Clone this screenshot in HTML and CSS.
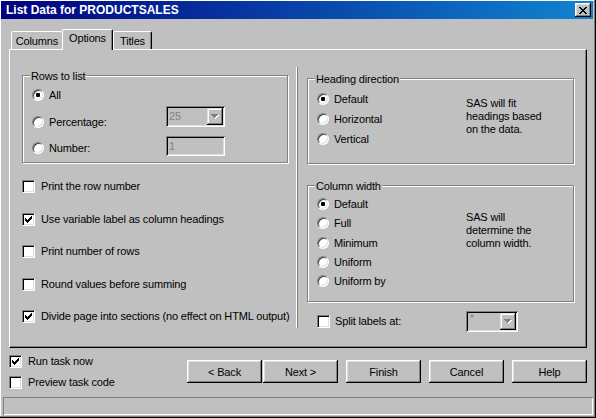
FILE: index.html
```html
<!DOCTYPE html>
<html>
<head>
<meta charset="utf-8">
<title>List Data for PRODUCTSALES</title>
<link rel="stylesheet" href="styles.css">
</head>
<body>
<div class="window">
  <div class="titlebar">
    <span class="title">List Data for PRODUCTSALES</span>
    <span class="close"><svg width="8" height="7" viewBox="0 0 8 7"><path d="M0 0h2v1H0zM6 0h2v1H6zM1 1h2v1H1zM5 1h2v1H5zM2 2h4v1H2zM3 3h2v1H3zM2 4h4v1H2zM1 5h2v1H1zM5 5h2v1H5zM0 6h2v1H0zM6 6h2v1H6z" fill="#000"/></svg></span>
  </div>

  <div class="tabs">
    <div class="tab tab-columns">Columns</div>
    <div class="tab tab-options active">Options</div>
    <div class="tab tab-titles">Titles</div>
  </div>

  <div class="panel">
    <div class="col-left">
      <div class="group group-rows">
        <span class="caption">Rows to list</span>
        <div class="opt"><span class="radio checked"></span><span>All</span></div>
        <div class="field-row row-pct">
          <div class="opt opt-field"><span class="radio"></span><span>Percentage:</span></div>
          <div class="combo combo-pct">
            <span class="combo-text">25</span>
            <span class="combo-btn"><svg width="8" height="5" viewBox="0 0 8 5"><path d="M1 1h7v1H1zM2 2h5v1H2zM3 3h3v1H3zM4 4h1v1H4z" fill="#fff"/><path d="M0 0h7v1H0zM1 1h5v1H1zM2 2h3v1H2zM3 3h1v1H3z" fill="#808080"/></svg></span>
          </div>
        </div>
        <div class="field-row row-num">
          <div class="opt opt-field opt-num"><span class="radio"></span><span>Number:</span></div>
          <div class="textbox">1</div>
        </div>
      </div>

      <div class="checks">
        <div class="chk"><span class="checkbox"></span><span>Print the row number</span></div>
        <div class="chk"><span class="checkbox"><svg width="7" height="7" viewBox="0 0 7 7"><path d="M0 2h1v3H0zM1 3h1v3H1zM2 4h1v3H2zM3 3h1v3H3zM4 2h1v3H4zM5 1h1v3H5zM6 0h1v3H6z" fill="#000"/></svg></span><span>Use variable label as column headings</span></div>
        <div class="chk"><span class="checkbox"></span><span>Print number of rows</span></div>
        <div class="chk"><span class="checkbox"></span><span>Round values before summing</span></div>
        <div class="chk"><span class="checkbox"><svg width="7" height="7" viewBox="0 0 7 7"><path d="M0 2h1v3H0zM1 3h1v3H1zM2 4h1v3H2zM3 3h1v3H3zM4 2h1v3H4zM5 1h1v3H5zM6 0h1v3H6z" fill="#000"/></svg></span><span>Divide page into sections (no effect on HTML output)</span></div>
      </div>
    </div>

    <div class="divider"></div>

    <div class="col-right">
      <div class="group group-heading">
        <span class="caption">Heading direction</span>
        <div class="radios radios-heading">
          <div class="opt"><span class="radio checked"></span><span>Default</span></div>
          <div class="opt"><span class="radio"></span><span>Horizontal</span></div>
          <div class="opt"><span class="radio"></span><span>Vertical</span></div>
        </div>
        <div class="desc desc-heading">SAS will fit<br>headings based<br>on the data.</div>
      </div>

      <div class="group group-width">
        <span class="caption">Column width</span>
        <div class="radios radios-width">
          <div class="opt"><span class="radio checked"></span><span>Default</span></div>
          <div class="opt"><span class="radio"></span><span>Full</span></div>
          <div class="opt"><span class="radio"></span><span>Minimum</span></div>
          <div class="opt"><span class="radio"></span><span>Uniform</span></div>
          <div class="opt"><span class="radio"></span><span>Uniform by</span></div>
        </div>
        <div class="desc desc-width">SAS will<br>determine the<br>column width.</div>
      </div>

      <div class="split-row">
        <div class="chk split-label"><span class="checkbox"></span><span>Split labels at:</span></div>
        <div class="combo combo-split">
          <span class="combo-text combo-text-small">*</span>
          <span class="combo-btn"><svg width="8" height="5" viewBox="0 0 8 5"><path d="M1 1h7v1H1zM2 2h5v1H2zM3 3h3v1H3zM4 4h1v1H4z" fill="#fff"/><path d="M0 0h7v1H0zM1 1h5v1H1zM2 2h3v1H2zM3 3h1v1H3z" fill="#808080"/></svg></span>
        </div>
      </div>
    </div>
  </div>

  <div class="footer">
    <div class="footer-checks">
      <div class="chk"><span class="checkbox"><svg width="7" height="7" viewBox="0 0 7 7"><path d="M0 2h1v3H0zM1 3h1v3H1zM2 4h1v3H2zM3 3h1v3H3zM4 2h1v3H4zM5 1h1v3H5zM6 0h1v3H6z" fill="#000"/></svg></span><span>Run task now</span></div>
      <div class="chk"><span class="checkbox"></span><span>Preview task code</span></div>
    </div>
    <div class="buttons">
      <button class="btn btn-back">&lt; Back</button>
      <button class="btn btn-next">Next &gt;</button>
      <button class="btn btn-gap">Finish</button>
      <button class="btn btn-gap">Cancel</button>
      <button class="btn btn-gap">Help</button>
    </div>
  </div>

  <div class="statusbar"></div>
</div>
</body>
</html>
```

FILE: styles.css
```css
* {
  box-sizing: border-box;
}

html,
body {
  margin: 0;
  padding: 0;
}

body {
  background: #c0c0c0;
  font-family: "Liberation Sans", Arial, sans-serif;
  font-size: 11px;
  letter-spacing: -0.15px;
  color: #000;
}

.window {
  width: 596px;
  height: 418px;
  padding: 1px 3px 3px 1px;
  display: flex;
  flex-direction: column;
  background: #c0c0c0;
  box-shadow: inset -1px -1px 0 #000, inset -2px -2px 0 #808080, inset 1px 1px 0 #fff;
}

/* title bar */
.titlebar {
  height: 18px;
  flex: none;
  display: flex;
  align-items: center;
  padding: 0 2px 0 5px;
  background: linear-gradient(to right, #000080, #1084d0);
}

.title {
  flex: 1;
  color: #fff;
  font-weight: bold;
  font-size: 12px;
  letter-spacing: 0;
  line-height: 18px;
  white-space: nowrap;
}

.close {
  width: 16px;
  height: 14px;
  display: flex;
  align-items: center;
  justify-content: center;
  background: #c0c0c0;
  box-shadow: inset -1px -1px 0 #000, inset 1px 1px 0 #fff, inset -2px -2px 0 #808080, inset 2px 2px 0 #dfdfdf;
}

.close svg {
  display: block;
}

/* tabs */
.tabs {
  flex: none;
  height: 20px;
  margin-top: 10px;
  padding-left: 10px;
  display: flex;
  align-items: flex-end;
}

.tab {
  height: 18px;
  padding-top: 3px;
  line-height: 13px;
  text-align: center;
  white-space: nowrap;
  background: #c0c0c0;
  border-top: 1px solid #fff;
  border-left: 1px solid #fff;
  border-right: 1px solid #000;
  border-radius: 2px 2px 0 0;
  box-shadow: inset -1px 0 0 #808080;
}

.tab-columns {
  width: 51px;
  border-right: none;
  box-shadow: none;
}

.tab-options {
  width: 51px;
}

.tab-titles {
  width: 39px;
}

.tab.active {
  height: 21px;
  padding-top: 2px;
  margin-bottom: -1px;
  position: relative;
  z-index: 1;
}

/* tab page */
.panel {
  flex: none;
  margin-left: 8px;
  width: 578px;
  height: 299px;
  display: flex;
  border-top: 1px solid #fff;
  border-left: 1px solid #fff;
  border-right: 1px solid #000;
  border-bottom: 1px solid #000;
  box-shadow: inset -1px -1px 0 #808080;
}

.col-left {
  width: 286px;
  flex: none;
  padding: 25px 0 0 12px;
  display: flex;
  flex-direction: column;
}

.divider {
  flex: none;
  width: 2px;
  height: 261px;
  margin-top: 17px;
  border-left: 1px solid #fff;
  border-right: 1px solid #808080;
}

.col-right {
  flex: none;
  padding: 28px 0 0 9px;
  display: flex;
  flex-direction: column;
}

/* group boxes */
.group {
  position: relative;
  border: 1px solid #808080;
  box-shadow: inset 1px 1px 0 #fff, 1px 1px 0 #fff;
}

.caption {
  position: absolute;
  top: -6px;
  left: 7px;
  padding: 0 1px 0 1px;
  line-height: 13px;
  background: #c0c0c0;
  white-space: nowrap;
}

.group-rows {
  width: 266px;
  height: 88px;
  padding: 13px 0 0 9px;
}

.group-heading {
  width: 267px;
  height: 86px;
  padding: 14px 0 0 9px;
  display: flex;
}

.group-width {
  width: 267px;
  height: 117px;
  margin-top: 21px;
  padding: 12px 0 0 9px;
  display: flex;
}

/* options */
.opt {
  display: flex;
  align-items: center;
  gap: 5px;
  height: 12px;
  line-height: 12px;
  white-space: nowrap;
}

.radio {
  flex: none;
  position: relative;
  width: 12px;
  height: 12px;
  border-radius: 50%;
  background: #fff;
  border: 1px solid;
  border-color: #808080 #fff #fff #808080;
  box-shadow: inset 1px 1px 0 #404040, inset -1px -1px 0 #dfdfdf;
}

.radio.checked::after {
  content: "";
  position: absolute;
  left: 3px;
  top: 3px;
  width: 4px;
  height: 4px;
  border-radius: 1px;
  background: #000;
}

.field-row {
  display: flex;
  align-items: flex-start;
}

.row-pct {
  margin-top: 5px;
}

.row-num {
  margin-top: 8px;
}

.opt-field {
  width: 134px;
  flex: none;
  margin-top: 10px;
}

.opt-num {
  margin-top: 6px;
}

.radios {
  flex: none;
  width: 149px;
  display: flex;
  flex-direction: column;
}

.radios-heading {
  gap: 8px;
}

.radios-width {
  gap: 7.25px;
}

.desc {
  line-height: 13px;
  white-space: nowrap;
}

.desc-heading {
  margin-top: 4px;
}

.desc-width {
  margin-top: 13px;
}

/* fields */
.combo {
  flex: none;
  display: flex;
  padding: 2px;
  background: #c0c0c0;
  box-shadow: inset 1px 1px 0 #808080, inset -1px -1px 0 #fff, inset 2px 2px 0 #000, inset -2px -2px 0 #dfdfdf;
}

.combo-pct {
  width: 59px;
  height: 21px;
}

.combo-split {
  width: 52px;
  height: 21px;
}

.combo-text {
  flex: 1;
  color: #808080;
  padding-left: 1px;
  line-height: 17px;
}

.combo-text-small {
  font-size: 10px;
  line-height: 11px;
  padding-left: 2px;
}

.combo-btn {
  flex: none;
  width: 16px;
  height: 17px;
  display: flex;
  align-items: center;
  justify-content: center;
  background: #c0c0c0;
  box-shadow: inset -1px -1px 0 #000, inset 1px 1px 0 #dfdfdf, inset -2px -2px 0 #808080, inset 2px 2px 0 #fff;
}

.combo-btn svg {
  display: block;
}

.textbox {
  flex: none;
  width: 59px;
  height: 20px;
  padding: 2px 3px;
  line-height: 16px;
  color: #808080;
  background: #c0c0c0;
  box-shadow: inset 1px 1px 0 #808080, inset -1px -1px 0 #fff, inset 2px 2px 0 #000, inset -2px -2px 0 #dfdfdf;
}

/* checkboxes */
.checks {
  margin-top: 17px;
  display: flex;
  flex-direction: column;
  gap: 19.5px;
}

.chk {
  display: flex;
  align-items: center;
  gap: 6px;
  height: 13px;
  line-height: 13px;
  white-space: nowrap;
}

.checkbox {
  flex: none;
  width: 13px;
  height: 13px;
  display: flex;
  align-items: center;
  justify-content: center;
  background: #fff;
  border: 1px solid;
  border-color: #808080 #fff #fff #808080;
  box-shadow: inset 1px 1px 0 #000, inset -1px -1px 0 #dfdfdf;
}

.checkbox svg {
  display: block;
}

.split-row {
  margin-top: 9px;
  margin-left: 10px;
  height: 21px;
  display: flex;
  align-items: center;
}

.split-label {
  width: 149px;
  flex: none;
  gap: 5px;
}

/* footer */
.footer {
  flex: none;
  height: 49px;
  padding: 7px 0 0 8px;
  display: flex;
}

.footer-checks {
  flex: none;
  width: 178px;
  display: flex;
  flex-direction: column;
  gap: 8px;
}

.buttons {
  display: flex;
  margin-top: 5px;
}

.btn {
  width: 75px;
  height: 23px;
  padding: 0;
  border: none;
  font: inherit;
  color: #000;
  letter-spacing: inherit;
  background: #c0c0c0;
  box-shadow: inset -1px -1px 0 #000, inset 1px 1px 0 #fff, inset -2px -2px 0 #808080, inset 2px 2px 0 #dfdfdf;
}

.btn-next {
  margin-left: 1px;
}

.btn-gap {
  margin-left: 8px;
}

.statusbar {
  flex: none;
  height: 18px;
  margin-left: 2px;
  box-shadow: inset 1px 1px 0 #808080, inset -1px -1px 0 #fff;
}
```
